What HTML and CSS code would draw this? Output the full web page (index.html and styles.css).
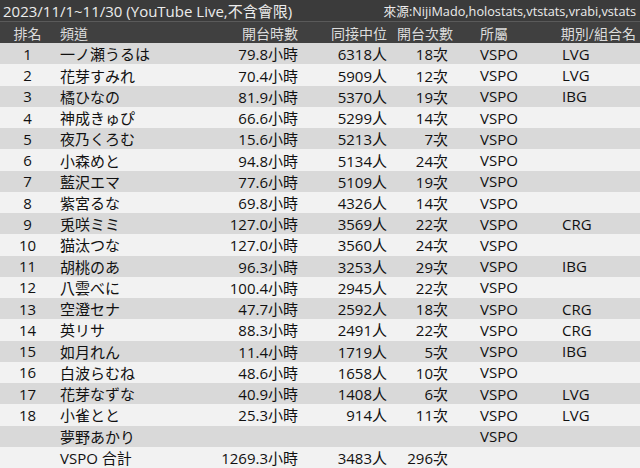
FILE: index.html
```html
<!DOCTYPE html>
<html lang="zh-Hant">
<head>
<meta charset="utf-8">
<title>VSPO 2023/11</title>
<link rel="stylesheet" href="styles.css">
</head>
<body>
<div class="sheet">
  <div class="title-row">
    <span class="title">2023/11/1~11/30 (YouTube Live,不含會限)</span>
    <span class="source">來源:NijiMado,holostats,vtstats,vrabi,vstats</span>
  </div>
  <div class="row head">
    <div class="c rank">排名</div>
    <div class="c name">頻道</div>
    <div class="c hours">開台時數</div>
    <div class="c ccv">同接中位</div>
    <div class="c count count-head">開台次數</div>
    <div class="c org">所屬</div>
    <div class="c gen gen-head">期別/組合名</div>
  </div>
  <div class="row dark"><div class="c rank">1</div><div class="c name">一ノ瀬うるは</div><div class="c hours">79.8小時</div><div class="c ccv">6318人</div><div class="c count">18次</div><div class="c org">VSPO</div><div class="c gen">LVG</div></div>
  <div class="row light"><div class="c rank">2</div><div class="c name">花芽すみれ</div><div class="c hours">70.4小時</div><div class="c ccv">5909人</div><div class="c count">12次</div><div class="c org">VSPO</div><div class="c gen">LVG</div></div>
  <div class="row dark"><div class="c rank">3</div><div class="c name">橘ひなの</div><div class="c hours">81.9小時</div><div class="c ccv">5370人</div><div class="c count">19次</div><div class="c org">VSPO</div><div class="c gen">IBG</div></div>
  <div class="row light"><div class="c rank">4</div><div class="c name">神成きゅぴ</div><div class="c hours">66.6小時</div><div class="c ccv">5299人</div><div class="c count">14次</div><div class="c org">VSPO</div><div class="c gen"></div></div>
  <div class="row dark"><div class="c rank">5</div><div class="c name">夜乃くろむ</div><div class="c hours">15.6小時</div><div class="c ccv">5213人</div><div class="c count">7次</div><div class="c org">VSPO</div><div class="c gen"></div></div>
  <div class="row light"><div class="c rank">6</div><div class="c name">小森めと</div><div class="c hours">94.8小時</div><div class="c ccv">5134人</div><div class="c count">24次</div><div class="c org">VSPO</div><div class="c gen"></div></div>
  <div class="row dark"><div class="c rank">7</div><div class="c name">藍沢エマ</div><div class="c hours">77.6小時</div><div class="c ccv">5109人</div><div class="c count">19次</div><div class="c org">VSPO</div><div class="c gen"></div></div>
  <div class="row light"><div class="c rank">8</div><div class="c name">紫宮るな</div><div class="c hours">69.8小時</div><div class="c ccv">4326人</div><div class="c count">14次</div><div class="c org">VSPO</div><div class="c gen"></div></div>
  <div class="row dark"><div class="c rank">9</div><div class="c name">兎咲ミミ</div><div class="c hours">127.0小時</div><div class="c ccv">3569人</div><div class="c count">22次</div><div class="c org">VSPO</div><div class="c gen">CRG</div></div>
  <div class="row light"><div class="c rank">10</div><div class="c name">猫汰つな</div><div class="c hours">127.0小時</div><div class="c ccv">3560人</div><div class="c count">24次</div><div class="c org">VSPO</div><div class="c gen"></div></div>
  <div class="row dark"><div class="c rank">11</div><div class="c name">胡桃のあ</div><div class="c hours">96.3小時</div><div class="c ccv">3253人</div><div class="c count">29次</div><div class="c org">VSPO</div><div class="c gen">IBG</div></div>
  <div class="row light"><div class="c rank">12</div><div class="c name">八雲べに</div><div class="c hours">100.4小時</div><div class="c ccv">2945人</div><div class="c count">22次</div><div class="c org">VSPO</div><div class="c gen"></div></div>
  <div class="row dark"><div class="c rank">13</div><div class="c name">空澄セナ</div><div class="c hours">47.7小時</div><div class="c ccv">2592人</div><div class="c count">18次</div><div class="c org">VSPO</div><div class="c gen">CRG</div></div>
  <div class="row light"><div class="c rank">14</div><div class="c name">英リサ</div><div class="c hours">88.3小時</div><div class="c ccv">2491人</div><div class="c count">22次</div><div class="c org">VSPO</div><div class="c gen">CRG</div></div>
  <div class="row dark"><div class="c rank">15</div><div class="c name">如月れん</div><div class="c hours">11.4小時</div><div class="c ccv">1719人</div><div class="c count">5次</div><div class="c org">VSPO</div><div class="c gen">IBG</div></div>
  <div class="row light"><div class="c rank">16</div><div class="c name">白波らむね</div><div class="c hours">48.6小時</div><div class="c ccv">1658人</div><div class="c count">10次</div><div class="c org">VSPO</div><div class="c gen"></div></div>
  <div class="row dark"><div class="c rank">17</div><div class="c name">花芽なずな</div><div class="c hours">40.9小時</div><div class="c ccv">1408人</div><div class="c count">6次</div><div class="c org">VSPO</div><div class="c gen">LVG</div></div>
  <div class="row light"><div class="c rank">18</div><div class="c name">小雀とと</div><div class="c hours">25.3小時</div><div class="c ccv">914人</div><div class="c count">11次</div><div class="c org">VSPO</div><div class="c gen">LVG</div></div>
  <div class="row dark"><div class="c rank"></div><div class="c name">夢野あかり</div><div class="c hours"></div><div class="c ccv"></div><div class="c count"></div><div class="c org">VSPO</div><div class="c gen"></div></div>
  <div class="row light"><div class="c rank"></div><div class="c name">VSPO 合計</div><div class="c hours">1269.3小時</div><div class="c ccv">3483人</div><div class="c count">296次</div><div class="c org"></div><div class="c gen"></div></div>
</div>
</body>
</html>
```

FILE: styles.css
```css
html, body {
  margin: 0;
  padding: 0;
  background: #f2f2f2;
}

.sheet {
  width: 640px;
  height: 468px;
  display: grid;
  grid-template-rows: repeat(22, 1fr);
  font-family: "Open Sans", "Noto Sans CJK TC", sans-serif;
  font-size: 15px;
  color: #111;
  overflow: hidden;
}

.title-row {
  display: flex;
  justify-content: space-between;
  align-items: center;
  background: #3b3b3b;
  color: #ececec;
  padding: 0 4px 0 3px;
  border-bottom: 1px solid #5a5a5a;
  white-space: nowrap;
}

.title {
  font-size: 15px;
}

.source {
  font-size: 12.7px;
}

.row {
  display: grid;
  grid-template-columns: 55px 145px 102px 89px 79px 82px 88px;
  align-items: center;
  white-space: nowrap;
}

.row.head {
  background: #404040;
  color: #dcdcdc;
  font-size: 14px;
}

.row.dark { background: #d9d9d9; }
.row.light { background: #f2f2f2; }

.c { overflow: hidden; }

.rank { text-align: center; }
.name { padding-left: 5px; }
.hours { text-align: right; padding-right: 4px; }
.ccv { text-align: right; padding-right: 4px; }
.count { text-align: right; padding-right: 22px; }
.count-head { padding-right: 17px; }
.org { padding-left: 10px; }
.gen { padding-left: 10px; }
.gen-head { padding-left: 0; padding-right: 4px; text-align: right; }
```
